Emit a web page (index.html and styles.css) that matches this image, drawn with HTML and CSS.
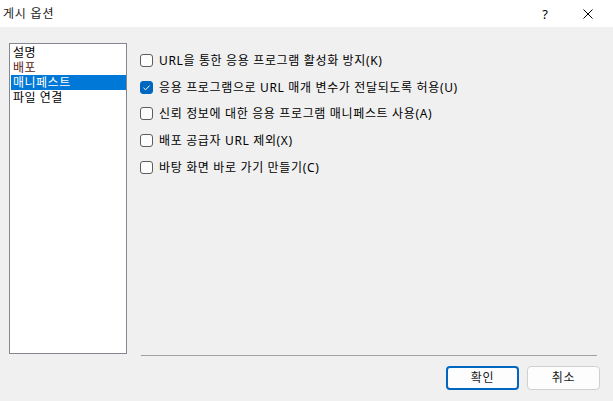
FILE: index.html
```html
<!DOCTYPE html>
<html lang="ko">
<head>
<meta charset="utf-8">
<title>게시 옵션</title>
<link rel="stylesheet" href="styles.css">
</head>
<body>
<div class="dialog">
  <div class="titlebar">
    <span class="title">게시 옵션</span>
    <div class="title-buttons">
      <span class="help">?</span>
      <span class="close">
        <svg width="10" height="10" viewBox="0 0 10 10"><path d="M0.5 0.5 L9.5 9.5 M9.5 0.5 L0.5 9.5" stroke="#000" stroke-width="1" fill="none"/></svg>
      </span>
    </div>
  </div>
  <div class="main">
    <ul class="listbox">
      <li>설명</li>
      <li class="accent">배포</li>
      <li class="selected">매니페스트</li>
      <li>파일 연결</li>
    </ul>
    <div class="panel">
      <div class="options">
        <label class="option"><span class="box"></span><span class="label">URL을 통한 응용 프로그램 활성화 방지(K)</span></label>
        <label class="option"><span class="box checked"><svg width="13" height="13" viewBox="0 0 13 13"><path d="M3.5 6.8 L5.6 8.8 L9.6 4.6" stroke="#fff" stroke-width="1" fill="none"/></svg></span><span class="label">응용 프로그램으로 URL 매개 변수가 전달되도록 허용(U)</span></label>
        <label class="option"><span class="box"></span><span class="label">신뢰 정보에 대한 응용 프로그램 매니페스트 사용(A)</span></label>
        <label class="option"><span class="box"></span><span class="label">배포 공급자 URL 제외(X)</span></label>
        <label class="option"><span class="box"></span><span class="label">바탕 화면 바로 가기 만들기(C)</span></label>
      </div>
      <div class="separator"></div>
    </div>
  </div>
  <div class="footer">
    <button class="btn default">확인</button>
    <button class="btn">취소</button>
  </div>
</div>
</body>
</html>
```
FILE: styles.css
```css
html, body {
  margin: 0;
  padding: 0;
}
body {
  width: 613px;
  height: 401px;
  background: #f0f0f0;
  font-family: "Noto Sans", "Noto Sans CJK KR", sans-serif;
  font-size: 12px;
  letter-spacing: 0.5px;
  color: #000;
  overflow: hidden;
}
.dialog {
  display: flex;
  flex-direction: column;
  height: 401px;
}
.titlebar {
  height: 27px;
  background: #fff;
  display: flex;
  align-items: center;
  justify-content: space-between;
  padding-left: 3px;
}
.title {
  font-size: 12px;
  line-height: 14px;
  letter-spacing: 0.8px;
  color: #1a1a1a;
}
.title-buttons {
  display: flex;
  align-items: center;
  height: 27px;
  padding-right: 2px;
}
.help {
  width: 30px;
  text-align: center;
  font-size: 13px;
  line-height: 14px;
  letter-spacing: 0;
  margin-right: 5px;
}
.close {
  width: 46px;
  height: 27px;
  display: flex;
  align-items: center;
  justify-content: center;
}
.main {
  display: flex;
  padding: 16px 16px 0 9px;
  gap: 13px;
}
.listbox {
  list-style: none;
  margin: 0;
  padding: 1px 0 1px 1px;
  width: 115px;
  height: 307px;
  border: 1px solid #828790;
  background: #fff;
  box-sizing: content-box;
}
.listbox li {
  height: 15px;
  line-height: 15px;
  padding-left: 2px;
  white-space: nowrap;
  overflow: hidden;
}
.listbox li.accent {
  color: #5c2210;
}
.listbox li.selected {
  background: #0078d7;
  color: #fff;
}
.panel {
  flex: 1;
  height: 313px;
  display: flex;
  flex-direction: column;
}
.options {
  display: flex;
  flex-direction: column;
  gap: 13.65px;
  padding-top: 11px;
}
.option {
  display: flex;
  align-items: center;
  height: 13px;
  gap: 6px;
}
.box {
  width: 13px;
  height: 13px;
  box-sizing: border-box;
  border: 1px solid #5d5d5d;
  border-radius: 3px;
  background: #fdfdfd;
  flex: none;
  display: flex;
}
.box.checked {
  background: #0067c0;
  border-color: #0067c0;
}
.box.checked svg {
  margin: -1px;
}
.label {
  line-height: 13px;
  letter-spacing: 0.65px;
  white-space: nowrap;
}
.separator {
  margin-top: auto;
  margin-left: 1px;
  height: 1px;
  background: #a0a0a0;
}
.footer {
  display: flex;
  justify-content: flex-end;
  gap: 8px;
  padding: 10px 13px 0 0;
}
.btn {
  width: 73px;
  height: 24px;
  box-sizing: border-box;
  border: 1px solid #d0d0d0;
  border-radius: 4px;
  background: #fdfdfd;
  font-family: "Noto Sans", "Noto Sans CJK KR", sans-serif;
  font-size: 12px;
  letter-spacing: 0.8px;
  color: #1a1a1a;
  padding: 0;
  line-height: 20px;
}
.btn.default {
  border: 2px solid #0067c0;
}
```
